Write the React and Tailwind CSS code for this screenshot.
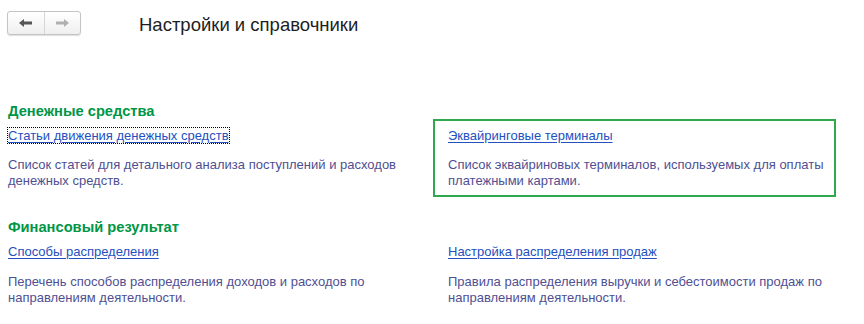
import React from 'react'

// ── Arrow glyphs for the back / forward buttons ─────────────────────────────
function Arrow({ dir = 'left', color }) {
  const d = dir === 'left'
    ? 'M0 4 L5 0 L5 2.5 L13 2.5 L13 5.5 L5 5.5 L5 8 Z'
    : 'M13 4 L8 0 L8 2.5 L0 2.5 L0 5.5 L8 5.5 L8 8 Z'
  return (
    <svg width="13" height="8" viewBox="0 0 13 8">
      <path d={d} fill={color} />
    </svg>
  )
}

function Card({ title, text, focused, selected, left, gap = 'mt-[13px]' }) {
  return (
    <div
      className={
        'border-2 pt-[7px] pb-[6px] ' +
        (selected ? 'border-[#2fa84f] ' : 'border-transparent ') +
        (left ? 'pl-0' : 'pl-[13px]')
      }
    >
      <div className="leading-[16px]">
        <span
          className={
            'text-[#2450c0] underline underline-offset-2 cursor-pointer ' +
            (focused ? 'outline-1 outline-dotted outline-black' : '')
          }
        >
          {title}
        </span>
      </div>
      <p className={gap + ' leading-[16px] text-[#4f4f93]'}>{text}</p>
    </div>
  )
}

export default function App() {
  return (
    <div
      className="w-[864px] h-[324px] bg-white text-[13px] overflow-hidden"
      style={{ fontFamily: '"Liberation Sans", Arial, sans-serif' }}
    >
      {/* ── Header ── */}
      <div className="flex items-center pt-2 pl-[7px]">
        <div className="flex h-6 w-[74px] rounded-[3px] border border-[#c4c4c4] bg-gradient-to-b from-white to-[#efefef] shadow-[0_1px_1px_#00000022]">
          <div className="flex-1 flex items-center justify-center border-r border-[#d6d6d6]">
            <Arrow dir="left" color="#555555" />
          </div>
          <div className="flex-1 flex items-center justify-center">
            <Arrow dir="right" color="#b0b0b0" />
          </div>
        </div>
        <h1 className="ml-[58px] mt-[3px] text-[18.5px] text-[#1e1e1e]">Настройки и справочники</h1>
      </div>

      {/* ── Денежные средства ── */}
      <div className="pl-[6px]">
        <h2 className="mt-[64px] pl-[2px] leading-[16px] font-bold text-[14.7px] text-[#009646]">
          Денежные средства
        </h2>
        <div className="grid grid-cols-[427px_403px]">
          <Card
            left
            focused
            title="Статьи движения денежных средств"
            text={<>Список статей для детального анализа поступлений и расходов<br />денежных средств.</>}
          />
          <Card
            selected
            title="Эквайринговые терминалы"
            text={<>Список эквайриновых терминалов, используемых для оплаты<br />платежными картами.</>}
          />
        </div>

        {/* ── Финансовый результат ── */}
        <h2 className="mt-[22px] pl-[2px] leading-[16px] font-bold text-[14.7px] text-[#009646]">
          Финансовый результат
        </h2>
        <div className="grid grid-cols-[427px_403px]">
          <Card
            left
            gap="mt-[14px]"
            title="Способы распределения"
            text={<>Перечень способов распределения доходов и расходов по<br />направлениям деятельности.</>}
          />
          <Card
            gap="mt-[14px]"
            title="Настройка распределения продаж"
            text={<>Правила распределения выручки и себестоимости продаж по<br />направлениям деятельности.</>}
          />
        </div>
      </div>
    </div>
  )
}
